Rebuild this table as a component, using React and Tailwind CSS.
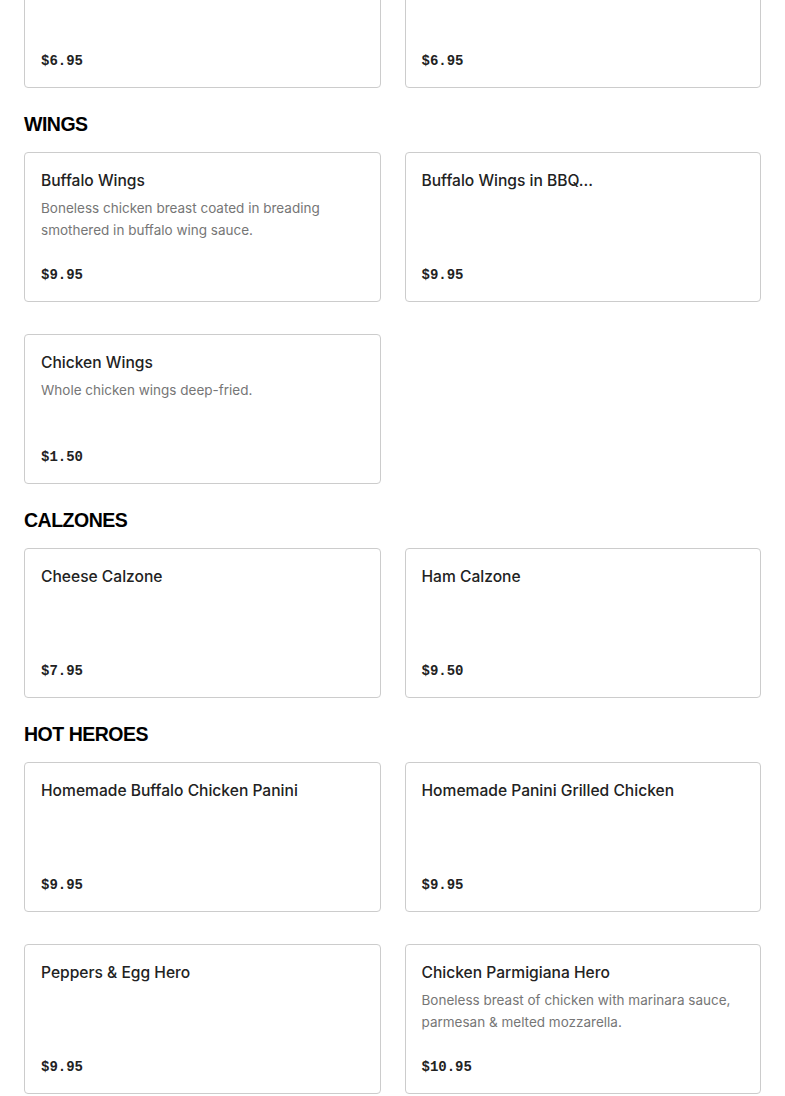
const sections = [
  {
    title: null,
    items: [
      { name: '', price: '$6.95' },
      { name: '', price: '$6.95' },
    ],
  },
  {
    title: 'WINGS',
    items: [
      {
        name: 'Buffalo Wings',
        desc: 'Boneless chicken breast coated in breading smothered in buffalo wing sauce.',
        price: '$9.95',
      },
      { name: 'Buffalo Wings in BBQ...', price: '$9.95' },
      { name: 'Chicken Wings', desc: 'Whole chicken wings deep-fried.', price: '$1.50' },
    ],
  },
  {
    title: 'CALZONES',
    items: [
      { name: 'Cheese Calzone', price: '$7.95' },
      { name: 'Ham Calzone', price: '$9.50' },
    ],
  },
  {
    title: 'HOT HEROES',
    items: [
      { name: 'Homemade Buffalo Chicken Panini', price: '$9.95' },
      { name: 'Homemade Panini Grilled Chicken', price: '$9.95' },
      { name: 'Peppers & Egg Hero', price: '$9.95' },
      {
        name: 'Chicken Parmigiana Hero',
        desc: 'Boneless breast of chicken with marinara sauce, parmesan & melted mozzarella.',
        price: '$10.95',
      },
    ],
  },
];

const ItemCard = ({ item }) => (
  <div className="h-[150px] border border-[#cccccc] rounded-[4px] bg-white p-4 flex flex-col justify-between">
    <div>
      <h3 className="text-[15.6px] leading-6 font-medium text-[#222222] font-['Inter',sans-serif]">
        {item.name}
      </h3>
      {item.desc && (
        <p className="mt-1 text-[13.5px] leading-[22px] text-[#767676] font-['Inter',sans-serif]">
          {item.desc}
        </p>
      )}
    </div>
    <span className="text-[14px] leading-5 font-bold text-[#222222] font-['Liberation_Mono',monospace]">
      {item.price}
    </span>
  </div>
);

export default function App() {
  return (
    <div className="bg-white min-h-screen overflow-hidden px-6">
      {sections.map((section, i) => (
        <section key={i} className={i === 0 ? '-mt-[62px]' : ''}>
          {section.title && (
            <h2 className="pt-[22px] mb-[14px] text-[19.5px] leading-7 font-black tracking-tight text-black font-['Liberation_Sans',Arial,sans-serif]">
              {section.title}
            </h2>
          )}
          <div className="grid grid-cols-2 gap-x-6 gap-y-8">
            {section.items.map((item, j) => (
              <ItemCard key={j} item={item} />
            ))}
          </div>
        </section>
      ))}
    </div>
  );
}
